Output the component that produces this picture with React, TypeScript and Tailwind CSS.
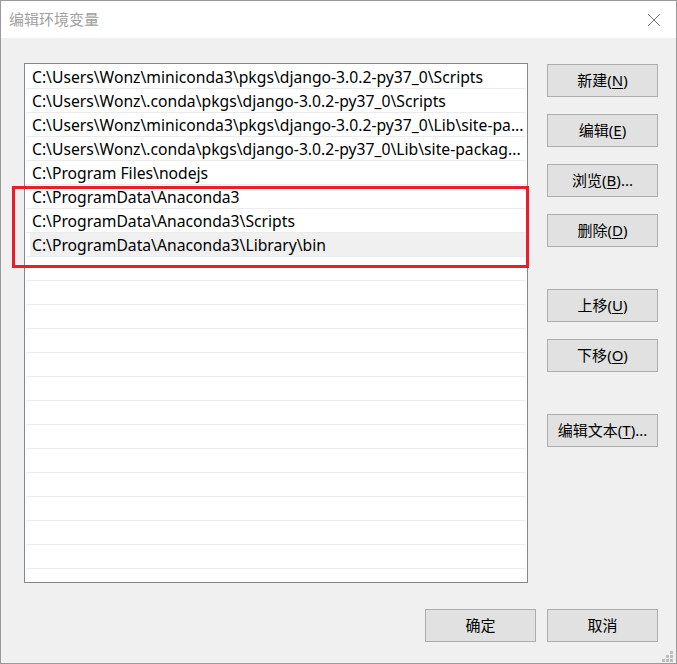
import React from "react";

const paths = [
  "C:\\Users\\Wonz\\miniconda3\\pkgs\\django-3.0.2-py37_0\\Scripts",
  "C:\\Users\\Wonz\\.conda\\pkgs\\django-3.0.2-py37_0\\Scripts",
  "C:\\Users\\Wonz\\miniconda3\\pkgs\\django-3.0.2-py37_0\\Lib\\site-pa...",
  "C:\\Users\\Wonz\\.conda\\pkgs\\django-3.0.2-py37_0\\Lib\\site-packag...",
  "C:\\Program Files\\nodejs",
  "C:\\ProgramData\\Anaconda3",
  "C:\\ProgramData\\Anaconda3\\Scripts",
  "C:\\ProgramData\\Anaconda3\\Library\\bin",
];

const ROWS = 21;
const SELECTED = 7;

function WinButton({ label, hotkey, suffix = "", className = "" }: { label: string; hotkey?: string; suffix?: string; className?: string }) {
  return (
    <button
      className={`h-[33px] w-[111px] border border-[#adadad] bg-[#e1e1e1] text-[15px] text-black flex items-center justify-center ${className}`}
    >
      {label}
      {hotkey && (
        <>
          (<span className="underline underline-offset-2">{hotkey}</span>){suffix}
        </>
      )}
    </button>
  );
}

export default function App() {
  return (
    <div
      className="relative w-[677px] h-[664px] border border-[#9a9a9a] bg-[#f0f0f0] flex flex-col"
      style={{ fontFamily: '"Noto Sans", "Noto Sans CJK SC", sans-serif' }}
    >
      {/* title bar */}
      <div className="h-[37px] bg-white flex items-center justify-between pl-[8px] pr-[15px]">
        <span className="text-[15px] text-[#a0a0a0]">编辑环境变量</span>
        <svg width="14" height="14" viewBox="0 0 14 14" className="text-[#777]">
          <path d="M1 1 L13 13 M13 1 L1 13" stroke="currentColor" strokeWidth="1" />
        </svg>
      </div>

      <div className="flex pl-[23px] pt-[25px]">
        {/* path list */}
        <div className="w-[504px] h-[520px] border border-[#828790] bg-white p-px overflow-hidden">
          {Array.from({ length: ROWS }).map((_, i) => (
            <div key={i} className="h-[24px] border-b border-[#ececec] flex">
              <div
                className={`ml-[4px] flex-1 flex items-center pl-[2px] pt-[3px] text-[15.7px] text-black whitespace-nowrap ${
                  i === SELECTED ? "bg-[#f0f0f0]" : ""
                }`}
              >
                {paths[i] ?? ""}
              </div>
            </div>
          ))}
        </div>

        {/* side buttons */}
        <div className="ml-[19px] mt-px flex flex-col">
          <WinButton label="新建" hotkey="N" />
          <WinButton label="编辑" hotkey="E" className="mt-[17px]" />
          <WinButton label="浏览" hotkey="B" suffix="..." className="mt-[17px]" />
          <WinButton label="删除" hotkey="D" className="mt-[17px]" />
          <WinButton label="上移" hotkey="U" className="mt-[42px]" />
          <WinButton label="下移" hotkey="O" className="mt-[17px]" />
          <WinButton label="编辑文本" hotkey="T" suffix="..." className="mt-[42px]" />
        </div>
      </div>

      {/* footer buttons */}
      <div className="flex justify-end gap-[11px] pr-[18px] pt-[26px]">
        <WinButton label="确定" />
        <WinButton label="取消" />
      </div>

      {/* red annotation box */}
      <div className="absolute left-[11px] top-[185px] w-[517px] h-[82px] border-[3px] border-[#ec1c28]" />

      {/* resize grip */}
      <div className="absolute right-[3px] bottom-[1px] grid grid-cols-3 gap-px">
        <span />
        <span />
        <span className="w-[3px] h-[3px] bg-[#bdbdbd]" />
        <span />
        <span className="w-[3px] h-[3px] bg-[#bdbdbd]" />
        <span className="w-[3px] h-[3px] bg-[#bdbdbd]" />
        <span className="w-[3px] h-[3px] bg-[#bdbdbd]" />
        <span className="w-[3px] h-[3px] bg-[#bdbdbd]" />
        <span className="w-[3px] h-[3px] bg-[#bdbdbd]" />
      </div>
    </div>
  );
}
